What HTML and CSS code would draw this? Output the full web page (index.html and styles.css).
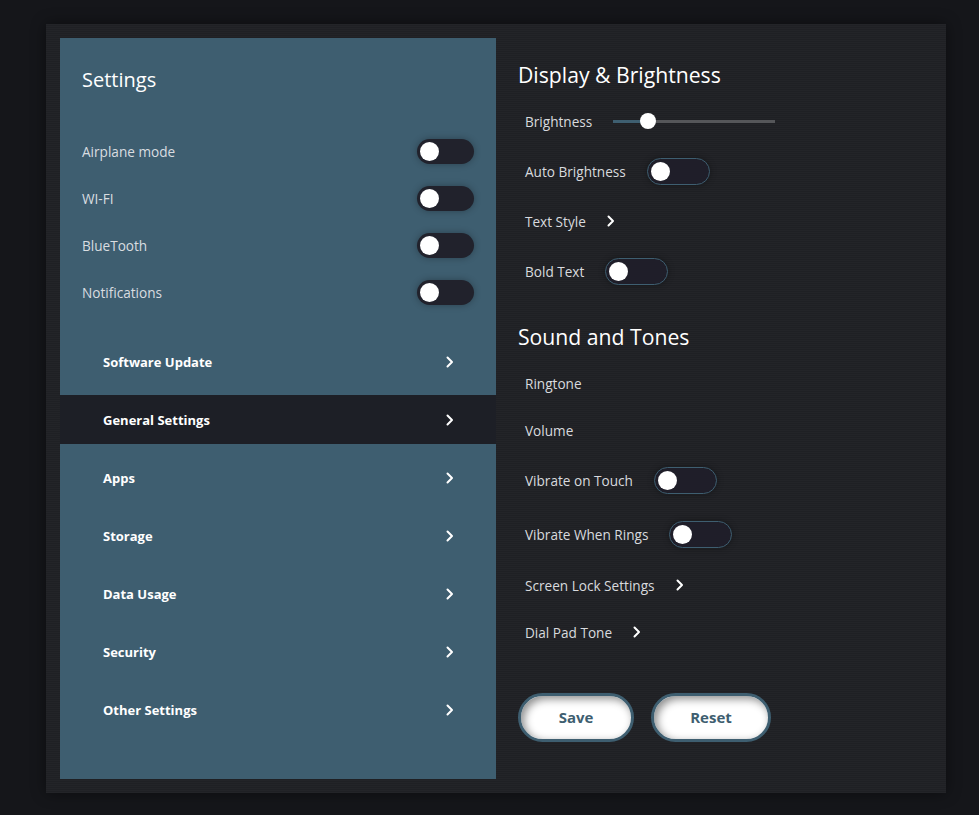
FILE: index.html
```html
<!DOCTYPE html>
<html lang="en">
<head>
<meta charset="utf-8">
<title>Settings</title>
<link rel="stylesheet" href="styles.css">
</head>
<body>
<div class="card">
  <aside class="sidebar">
    <h2 class="side-title">Settings</h2>
    <ul class="quick">
      <li class="quick-row"><span>Airplane mode</span><span class="switch"><span class="knob"></span></span></li>
      <li class="quick-row"><span>WI-FI</span><span class="switch"><span class="knob"></span></span></li>
      <li class="quick-row"><span>BlueTooth</span><span class="switch"><span class="knob"></span></span></li>
      <li class="quick-row"><span>Notifications</span><span class="switch"><span class="knob"></span></span></li>
    </ul>
    <nav class="nav">
      <a class="nav-item">Software Update<svg class="chev" viewBox="0 0 8 12"><path d="M1.5 1.5 L6 6 L1.5 10.5"/></svg></a>
      <a class="nav-item active">General Settings<svg class="chev" viewBox="0 0 8 12"><path d="M1.5 1.5 L6 6 L1.5 10.5"/></svg></a>
      <a class="nav-item">Apps<svg class="chev" viewBox="0 0 8 12"><path d="M1.5 1.5 L6 6 L1.5 10.5"/></svg></a>
      <a class="nav-item">Storage<svg class="chev" viewBox="0 0 8 12"><path d="M1.5 1.5 L6 6 L1.5 10.5"/></svg></a>
      <a class="nav-item">Data Usage<svg class="chev" viewBox="0 0 8 12"><path d="M1.5 1.5 L6 6 L1.5 10.5"/></svg></a>
      <a class="nav-item">Security<svg class="chev" viewBox="0 0 8 12"><path d="M1.5 1.5 L6 6 L1.5 10.5"/></svg></a>
      <a class="nav-item">Other Settings<svg class="chev" viewBox="0 0 8 12"><path d="M1.5 1.5 L6 6 L1.5 10.5"/></svg></a>
    </nav>
  </aside>
  <main class="content">
    <h2 class="sec-title">Display &amp; Brightness</h2>
    <div class="row row-text"><span>Brightness</span><span class="slider"><span class="fill"></span><span class="thumb"></span></span></div>
    <div class="row row-toggle"><span>Auto Brightness</span><span class="tog"><span class="knob"></span></span></div>
    <div class="row row-text"><span>Text Style</span><svg class="chev" viewBox="0 0 8 12"><path d="M1.5 1.5 L6 6 L1.5 10.5"/></svg></div>
    <div class="row row-toggle"><span>Bold Text</span><span class="tog"><span class="knob"></span></span></div>

    <h2 class="sec-title second">Sound and Tones</h2>
    <div class="row row-text"><span>Ringtone</span></div>
    <div class="row row-text"><span>Volume</span></div>
    <div class="row row-toggle"><span>Vibrate on Touch</span><span class="tog"><span class="knob"></span></span></div>
    <div class="row row-toggle tall"><span>Vibrate When Rings</span><span class="tog"><span class="knob"></span></span></div>
    <div class="row row-text"><span>Screen Lock Settings</span><svg class="chev" viewBox="0 0 8 12"><path d="M1.5 1.5 L6 6 L1.5 10.5"/></svg></div>
    <div class="row row-text"><span>Dial Pad Tone</span><svg class="chev" viewBox="0 0 8 12"><path d="M1.5 1.5 L6 6 L1.5 10.5"/></svg></div>

    <div class="actions">
      <button class="btn save">Save</button>
      <button class="btn reset">Reset</button>
    </div>
  </main>
</div>
</body>
</html>
```
FILE: styles.css
```css
* { box-sizing: border-box; }
html, body { margin: 0; padding: 0; }
body {
  background: #15161a;
  font-family: "Open Sans", "DejaVu Sans", sans-serif;
  color: #d8dade;
  height: 815px;
  overflow: hidden;
}
.card {
  margin: 24px 0 0 46px;
  width: 900px;
  height: 769px;
  padding: 14px;
  display: flex;
  background: repeating-linear-gradient(180deg, #232428 0 1px, #1f2024 1px 2px);
  box-shadow: 0 0 14px rgba(0,0,0,0.45);
}
.sidebar {
  width: 436px;
  flex: none;
  background: #3e5e70;
  padding-top: 27px;
}
.side-title {
  margin: 0;
  padding-left: 22px;
  font-size: 20px;
  line-height: 30px;
  font-weight: 400;
  color: #fff;
}
.quick {
  list-style: none;
  margin: 33px 0 0;
  padding: 0 22px;
}
.quick-row {
  height: 47px;
  display: flex;
  align-items: center;
  justify-content: space-between;
  font-size: 13.6px;
  color: #d9dde0;
}
.switch {
  width: 57px;
  height: 25px;
  border-radius: 13px;
  background: #21222c;
  box-shadow: 0 0 7px rgba(0,0,0,0.3);
  display: flex;
  align-items: center;
  padding-left: 3px;
}
.knob {
  width: 19px;
  height: 19px;
  border-radius: 50%;
  background: #fff;
}
.nav {
  margin-top: 21px;
  display: flex;
  flex-direction: column;
  gap: 9px;
}
.nav-item {
  height: 49px;
  display: flex;
  align-items: center;
  justify-content: space-between;
  padding: 0 42px 0 43px;
  font-size: 13px;
  font-weight: 700;
  color: #fff;
}
.nav-item.active { background: #1d1f26; }
.chev {
  width: 8px;
  height: 12px;
  fill: none;
  stroke: #fff;
  stroke-width: 2;
  stroke-linecap: round;
  stroke-linejoin: round;
}
.content {
  flex: 1;
  padding: 22px 0 0 22px;
}
.sec-title {
  margin: 0 0 7.5px;
  font-size: 21.2px;
  line-height: 30px;
  font-weight: 400;
  color: #fff;
}
.sec-title.second { margin-top: 24.5px; }
.row {
  display: flex;
  align-items: center;
  gap: 21px;
  padding-left: 7px;
  font-size: 13.6px;
  color: #d8dade;
}
.row-text { height: 47px; }
.row-toggle { height: 53px; }
.row-toggle.tall { height: 55px; }
.slider {
  position: relative;
  width: 162px;
  height: 3px;
  background: #555659;
}
.slider .fill {
  position: absolute;
  left: 0; top: 0;
  width: 35px;
  height: 3px;
  background: #3e5e70;
}
.slider .thumb {
  position: absolute;
  left: 27px;
  top: -7px;
  width: 16px;
  height: 16px;
  border-radius: 50%;
  background: #fff;
}
.tog {
  width: 63px;
  height: 27px;
  border-radius: 14px;
  border: 1px solid #3e5e70;
  background: #1f1e29;
  box-shadow: 0 0 6px rgba(0,0,0,0.35);
  display: flex;
  align-items: center;
  padding-left: 3px;
}
.tog .knob { width: 19px; height: 19px; }
.actions {
  margin-top: 37.5px;
  display: flex;
  gap: 17px;
}
.btn {
  height: 49px;
  border-radius: 25px;
  border: 3px solid #3e5e70;
  background: #fff;
  box-shadow: inset 3px 3px 8px rgba(0,0,0,0.45);
  color: #3e5e70;
  font-family: inherit;
  font-size: 15px;
  font-weight: 700;
  padding: 0 0 2px;
}
.save { width: 116px; }
.reset { width: 120px; }
```
